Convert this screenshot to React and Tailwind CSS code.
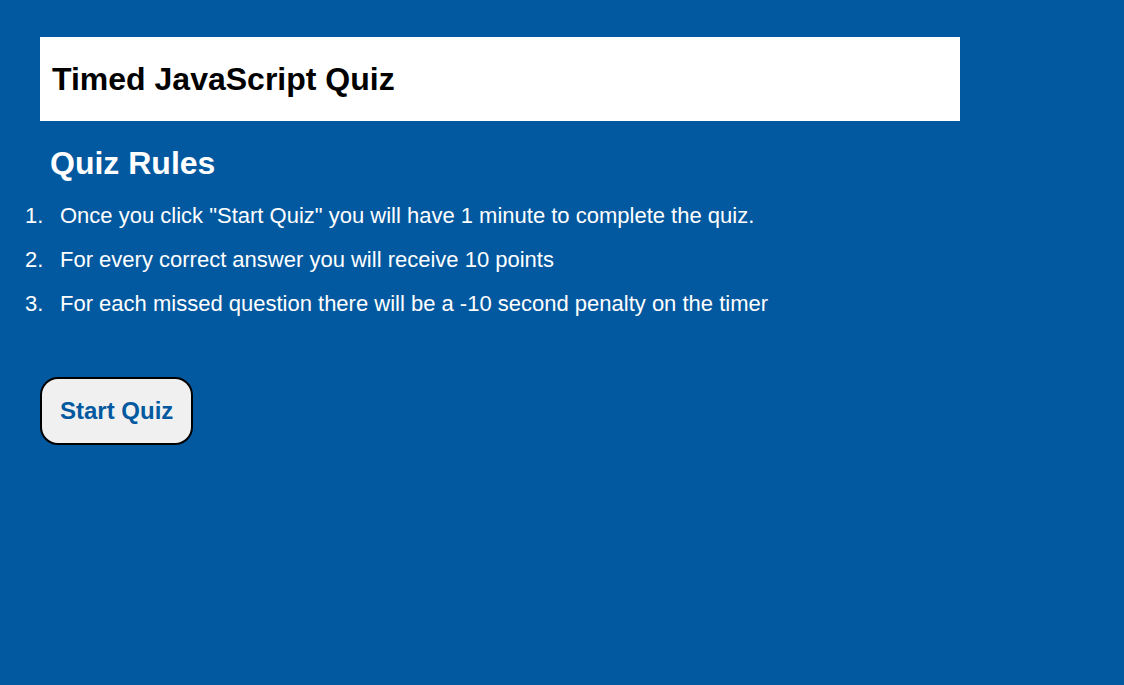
export default function App() {
    const rules = [
        'Once you click "Start Quiz" you will have 1 minute to complete the quiz.',
        "For every correct answer you will receive 10 points",
        "For each missed question there will be a -10 second penalty on the timer",
    ];

    return (
        <div className="min-h-screen w-full bg-[#03599f] font-['Liberation_Sans',Arial,sans-serif] pt-[37px]">
            <header className="ml-[40px] w-[920px] h-[84px] bg-white flex items-center px-[12px]">
                <h1 className="text-[32px] font-bold text-black">Timed JavaScript Quiz</h1>
            </header>

            <h2 className="ml-[50px] mt-[24px] text-[32px] font-bold text-white leading-[36px]">Quiz Rules</h2>

            <ol className="mt-[23px] flex flex-col gap-[20px]">
                {rules.map((rule, i) => (
                    <li key={i} className="flex text-[22px] leading-[24px] text-white">
                        <span className="w-[60px] pl-[25px] shrink-0">{i + 1}.</span>
                        <span>{rule}</span>
                    </li>
                ))}
            </ol>

            <button className="ml-[40px] mt-[61px] h-[68px] px-[18px] rounded-[18px] border-2 border-black bg-[#f0f0f0] text-[24px] font-bold text-[#03599f]">
                Start Quiz
            </button>
        </div>
    );
}
